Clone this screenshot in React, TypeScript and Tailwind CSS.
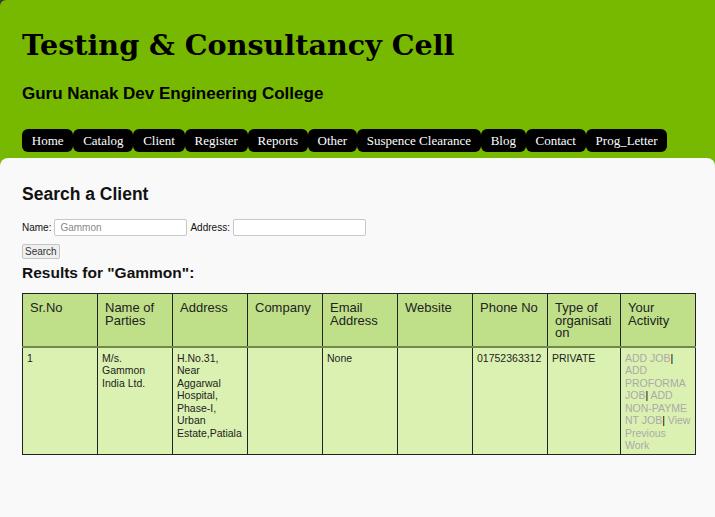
const navItems = ['Home', 'Catalog', 'Client', 'Register', 'Reports', 'Other', 'Suspence Clearance', 'Blog', 'Contact', 'Prog_Letter'];

const headers = ['Sr.No', 'Name of Parties', 'Address', 'Company', 'Email Address', 'Website', 'Phone No', 'Type of organisation', 'Your Activity'];

export default function App() {
    return (
        <div className="min-h-[517px] bg-[#3a3a3a] font-['Liberation_Sans',Arial,sans-serif]">
            <div className="rounded-tl-md bg-[#77b800]">
                <header className="px-[22px] pt-[28px]">
                    <h1 className="font-['DejaVu_Serif',serif] text-[28.6px] font-bold leading-[35px] text-black">
                        Testing &amp; Consultancy Cell
                    </h1>
                    <h2 className="mt-[21px] text-[17px] font-bold leading-[20px] text-black">
                        Guru Nanak Dev Engineering College
                    </h2>
                    <nav className="mt-[25px] flex">
                        {navItems.map((item) => (
                            <a
                                key={item}
                                href="#"
                                className="rounded-[6px] bg-black px-[9.8px] font-['Liberation_Serif',serif] text-[13px] leading-[23px] text-white"
                            >
                                {item}
                            </a>
                        ))}
                    </nav>
                </header>

                <main className="mt-[6px] min-h-[359px] rounded-t-lg bg-[#f9f9f9] px-[22px] pt-[26px] pb-6">
                    <h2 className="text-[17.5px] font-bold leading-[21px] text-[#111]">Search a Client</h2>

                    <form className="mt-[14px] flex items-center gap-[3px] text-[10px] text-[#111]">
                        <label>Name:</label>
                        <input
                            defaultValue="Gammon"
                            className="h-[17px] w-[133px] rounded-[2px] border border-[#c8c8c8] bg-white px-[5px] text-[10px] text-[#888] outline-none"
                        />
                        <label>Address:</label>
                        <input className="h-[17px] w-[133px] rounded-[2px] border border-[#c8c8c8] bg-white px-[5px] text-[10px] outline-none" />
                    </form>
                    <button className="mt-[8px] h-[15px] rounded-[2px] border border-[#c4c4c4] bg-[#efefef] px-[2px] text-[10px] leading-[13px] text-[#333]">
                        Search
                    </button>

                    <h3 className="mt-[2px] text-[15.5px] font-bold leading-[18px] text-[#111]">Results for "Gammon":</h3>

                    <table className="mt-[11px] w-[673px] table-fixed border-collapse border border-[#222] text-[#222]">
                        <colgroup>
                            {headers.map((h, i) => (
                                <col key={h} className={i === 7 ? 'w-[73px]' : 'w-[75px]'} />
                            ))}
                        </colgroup>
                        <thead>
                            <tr className="h-[53px] border-b-2 border-[#6f8a4a] bg-[#bfdf89]">
                                {headers.map((h) => (
                                    <th
                                        key={h}
                                        className="break-words border border-[#222] pt-[8px] pr-[6px] pl-[7px] text-left align-top text-[13px] font-normal leading-[12.5px]"
                                    >
                                        {h === 'Type of organisation' ? (
                                            <>Type of organisati<wbr />on</>
                                        ) : (
                                            h
                                        )}
                                    </th>
                                ))}
                            </tr>
                        </thead>
                        <tbody>
                            <tr className="h-[108px] bg-[#dbf1b1] align-top text-[10.5px] leading-[12.5px]">
                                <td className="border border-[#222] px-[4px] pt-[4px]">1</td>
                                <td className="border border-[#222] px-[4px] pt-[4px]">M/s.<br />Gammon India Ltd.</td>
                                <td className="border border-[#222] px-[4px] pt-[4px]">H.No.31,<br />Near Aggarwal Hospital, Phase-I, Urban Estate,Patiala</td>
                                <td className="border border-[#222] px-[4px] pt-[4px]"></td>
                                <td className="border border-[#222] px-[4px] pt-[4px]">None</td>
                                <td className="border border-[#222] px-[4px] pt-[4px]"></td>
                                <td className="border border-[#222] px-[4px] pt-[4px]">01752363312</td>
                                <td className="border border-[#222] px-[4px] pt-[4px]">PRIVATE</td>
                                <td className="break-words border border-[#222] pr-[3px] pl-[4px] pt-[4px] text-[#aaa]">
                                    <a href="#">ADD JOB</a><span className="text-black">|</span>{' '}
                                    <a href="#">ADD PROFORMA JOB</a><span className="text-black">|</span>{' '}
                                    <a href="#">ADD NON-PAYME<wbr />NT JOB</a><span className="text-black">|</span>{' '}
                                    <a href="#">View Previous Work</a>
                                </td>
                            </tr>
                        </tbody>
                    </table>
                </main>
            </div>
        </div>
    );
}
